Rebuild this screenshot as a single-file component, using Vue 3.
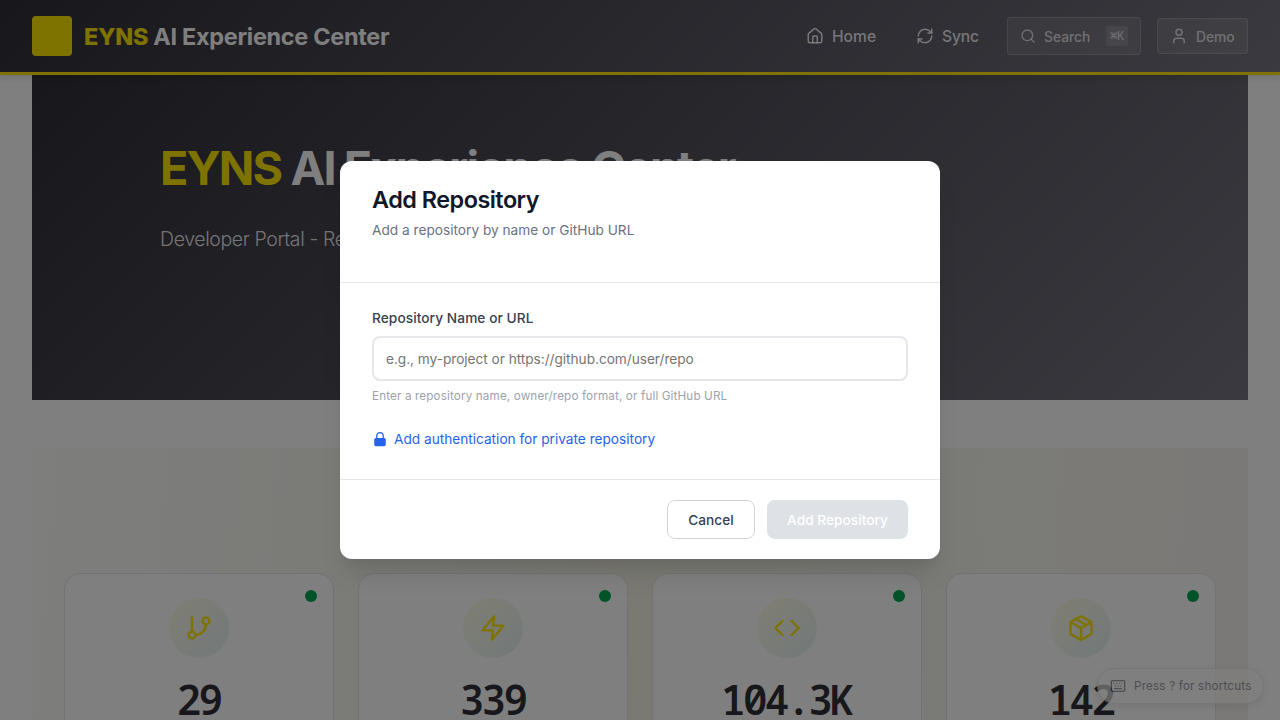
<script setup>
const stats = [
  { value: '29', icon: 'branch' },
  { value: '339', icon: 'zap' },
  { value: '104.3K', icon: 'code' },
  { value: '142', icon: 'package' },
]
</script>

<template>
  <div class="page">
    <header class="topbar">
      <div class="brand">
        <span class="logo"></span>
        <span class="brand-name"><b>EYNS</b> AI Experience Center</span>
      </div>
      <nav class="nav">
        <a class="nav-link">
          <svg class="icon" viewBox="0 0 24 24"><path d="M15 21v-8a1 1 0 0 0-1-1h-4a1 1 0 0 0-1 1v8" /><path d="M3 10a2 2 0 0 1 .709-1.528l7-5.999a2 2 0 0 1 2.582 0l7 5.999A2 2 0 0 1 21 10v9a2 2 0 0 1-2 2H5a2 2 0 0 1-2-2z" /></svg>
          <span class="home-text">Home</span>
        </a>
        <a class="nav-link">
          <svg class="icon" viewBox="0 0 24 24"><path d="M3 12a9 9 0 0 1 9-9 9.75 9.75 0 0 1 6.74 2.74L21 8" /><path d="M21 3v5h-5" /><path d="M21 12a9 9 0 0 1-9 9 9.75 9.75 0 0 1-6.74-2.74L3 16" /><path d="M8 16H3v5" /></svg>
          <span class="sync-text">Sync</span>
        </a>
        <button class="search">
          <svg class="icon small" viewBox="0 0 24 24"><circle cx="11" cy="11" r="8" /><path d="m21 21-4.3-4.3" /></svg>
          <span>Search</span>
          <kbd><i>⌘</i>K</kbd>
        </button>
        <button class="user">
          <svg class="icon" viewBox="0 0 24 24"><path d="M19 21v-2a4 4 0 0 0-4-4H9a4 4 0 0 0-4 4v2" /><circle cx="12" cy="7" r="4" /></svg>
          <span>Demo</span>
        </button>
      </nav>
    </header>

    <section class="hero">
      <h1><b>EYNS</b> AI Experience Center</h1>
      <p>Developer Portal - Repository Analytics</p>
    </section>

    <section class="stats">
      <article v-for="s in stats" :key="s.icon" class="card">
        <span class="dot"></span>
        <span class="badge">
          <svg v-if="s.icon === 'branch'" viewBox="0 0 24 24"><path d="M6 3v12" /><circle cx="18" cy="6" r="3" /><circle cx="6" cy="18" r="3" /><path d="M18 9a9 9 0 0 1-9 9" /></svg>
          <svg v-else-if="s.icon === 'zap'" viewBox="0 0 24 24"><path d="M13 2 3 14h9l-1 8 10-12h-9z" /></svg>
          <svg v-else-if="s.icon === 'code'" viewBox="0 0 24 24"><path d="m16 18 6-6-6-6M8 6l-6 6 6 6" /></svg>
          <svg v-else viewBox="0 0 24 24"><path d="m7.5 4.27 9 5.15" /><path d="M21 8a2 2 0 0 0-1-1.73l-7-4a2 2 0 0 0-2 0l-7 4A2 2 0 0 0 3 8v8a2 2 0 0 0 1 1.73l7 4a2 2 0 0 0 2 0l7-4A2 2 0 0 0 21 16Z" /><path d="m3.3 7 8.7 5 8.7-5" /><path d="M12 22V12" /></svg>
        </span>
        <div class="value">{{ s.value }}</div>
      </article>
    </section>

    <div class="hint">
      <svg class="icon small" viewBox="0 0 24 24"><rect x="2" y="4" width="20" height="16" rx="2" /><path d="M6 8h.01M10 8h.01M14 8h.01M18 8h.01M8 12h.01M12 12h.01M16 12h.01M7 16h10" /></svg>
      <span>Press ? for shortcuts</span>
    </div>

    <div class="overlay">
      <div class="modal">
        <div class="modal-head">
          <h2>Add Repository</h2>
          <p>Add a repository by name or GitHub URL</p>
        </div>
        <div class="modal-body">
          <label for="repo">Repository Name or URL</label>
          <input id="repo" placeholder="e.g., my-project or https://github.com/user/repo" />
          <p class="help">Enter a repository name, owner/repo format, or full GitHub URL</p>
          <a class="auth">
            <svg viewBox="0 0 20 20"><path d="M6 10V6a4 4 0 0 1 8 0v4" fill="none" stroke="currentColor" stroke-width="1.6" /><rect x="2.8" y="8.6" width="14.4" height="10.4" rx="2" /></svg>
            Add authentication for private repository
          </a>
        </div>
        <div class="modal-foot">
          <button class="cancel">Cancel</button>
          <button class="submit" disabled>Add Repository</button>
        </div>
      </div>
    </div>
  </div>
</template>

<style>
body { background: #fff; overflow: hidden; }
</style>

<style scoped>
* { box-sizing: border-box; }
h1, h2, p { margin: 0; }
button, input { font-family: inherit; letter-spacing: inherit; }
.page { position: relative; height: 720px; overflow: hidden; background: #fff; font-family: Inter, "Liberation Sans", sans-serif; }
.icon { width: 18px; height: 18px; fill: none; stroke: currentColor; stroke-width: 2; stroke-linecap: round; stroke-linejoin: round; flex: none; }
.icon.small { width: 16px; height: 16px; }
.topbar { position: relative; z-index: 1; display: flex; align-items: center; justify-content: space-between; height: 75px; padding: 0 32px; border-bottom: 3px solid #ffe600; background: linear-gradient(135deg, #2e2e38, #747480); box-shadow: 0 4px 6px rgba(0, 0, 0, .1); }
.brand { display: flex; align-items: center; gap: 12px; }
.logo { width: 40px; height: 40px; border-radius: 4px; background: #ffe600; }
.brand-name { font-size: 23.4px; line-height: 36px; font-weight: 700; letter-spacing: -.28px; color: #fff; padding-top: 1px; }
.brand-name b, .hero b { font-weight: inherit; color: #ffe600; }
.brand-name b { font-weight: 800; }
.nav { display: flex; align-items: center; gap: 16px; color: rgba(255, 255, 255, .9); }
.nav-link { display: flex; align-items: center; gap: 8px; padding: 0 12px; font-size: 15.6px; font-weight: 450; }
.home-text { width: 44px; }
.sync-text { width: 37px; letter-spacing: -.1px; }
.search, .user { display: flex; align-items: center; gap: 8px; border: 1px solid rgba(255, 255, 255, .2); border-radius: 4px; background: rgba(255, 255, 255, .1); color: rgba(255, 255, 255, .8); font-size: 13.8px; font-weight: 450; }
.search { width: 134px; height: 38px; padding: 0 12px; }
.user { width: 91px; height: 36px; padding: 0 12px; }
.user span, .search span { padding-top: 1px; }
kbd { display: flex; justify-content: center; width: 22px; height: 20px; margin-left: auto; border-radius: 2px; background: rgba(255, 255, 255, .15); font: 12.5px/19px "Noto Sans Mono", "Roboto Mono", monospace; letter-spacing: -.5px; }
kbd i { font-style: normal; }
.hero { height: 325px; margin: 0 32px; padding: 64px 128px; background: linear-gradient(135deg, #2e2e38, #747480); color: #fff; white-space: nowrap; }
.hero h1 { font-size: 46.7px; line-height: 58px; font-weight: 700; letter-spacing: -1.86px; }
.hero p { margin-top: 26px; font-size: 19.5px; line-height: 32px; font-weight: 300; letter-spacing: -.39px; color: rgba(255, 255, 255, .9); }
.stats { display: grid; grid-template-columns: repeat(4, 1fr); gap: 24px; height: 400px; margin: 48px 32px 0; padding: 125px 32px 0; background: radial-gradient(circle at 50% 50%, rgba(255, 230, 0, .03), transparent 60%), linear-gradient(95deg, #fcfcfb, #f7f7f1 22%, #f3f4eb 55%, #f6f6ef 80%, #f6f2ee); }
.card { position: relative; display: flex; flex-direction: column; align-items: center; height: 300px; padding-top: 24px; border: 1px solid #e5e5ea; border-radius: 16px; background: #fff; }
.dot { position: absolute; top: 16px; right: 16px; width: 12px; height: 12px; border-radius: 50%; background: #00a651; }
.badge { display: grid; place-items: center; width: 60px; height: 60px; border-radius: 50%; background: linear-gradient(135deg, rgba(255, 230, 0, .1), rgba(0, 120, 160, .1)); color: #ffe600; }
.badge svg { width: 28px; height: 28px; fill: none; stroke: currentColor; stroke-width: 2; stroke-linecap: round; stroke-linejoin: round; }
.value { margin: 21px 1px 0 0; font: 600 41px/40px "Noto Sans Mono", "Roboto Mono", monospace; letter-spacing: -2.8px; color: #2e2e38; }
.hint { position: absolute; right: 16px; bottom: 16px; display: flex; align-items: center; gap: 8px; width: 167px; height: 36px; padding: 0 12px 1px; border: 1px solid #e5e5ea; border-radius: 18px; background: #fff; color: #747480; font-size: 11.7px; letter-spacing: .17px; white-space: nowrap; opacity: .7; box-shadow: 0 2px 8px rgba(0, 0, 0, .12); }
.overlay { position: absolute; inset: 0; z-index: 5; display: flex; align-items: center; justify-content: center; background: rgba(0, 0, 0, .5); }
.modal { width: 600px; border-radius: 12px; background: #fff; box-shadow: 0 20px 25px -5px rgba(0, 0, 0, .1), 0 10px 10px -5px rgba(0, 0, 0, .04); }
.modal-head { height: 122px; padding: 24px 32px; border-bottom: 1px solid #e5e7eb; }
.modal-head h2 { font-size: 23.4px; line-height: 30px; font-weight: 600; letter-spacing: -.5px; color: #111827; }
.modal-head p { margin-top: 4px; font-size: 13.7px; line-height: 22px; letter-spacing: -.01px; color: #6b7280; }
.modal-body { height: 196px; padding: 24px 32px; }
.modal-body label { display: block; font-size: 13.7px; line-height: 22px; font-weight: 500; letter-spacing: .07px; color: #374151; }
.modal-body input { display: block; width: 100%; height: 45px; margin-top: 7px; padding: 0 12px; border: 2px solid #e5e7eb; border-radius: 8px; background: #fff; font-size: 13.7px; letter-spacing: -.04px; }
.modal-body input::placeholder { color: #757575; }
.help { margin-top: 5px; font-size: 11.7px; line-height: 20px; letter-spacing: .13px; color: #9ca3af; }
.auth { display: flex; align-items: center; gap: 6px; margin-top: 22px; font-size: 13.7px; line-height: 22px; letter-spacing: -.02px; color: #2563eb; }
.auth svg { width: 16px; height: 16px; fill: currentColor; }
.modal-foot { display: flex; justify-content: flex-end; gap: 12px; height: 80px; padding: 20px 32px; border-top: 1px solid #e5e7eb; }
.modal-foot button { height: 39px; padding: 0; border-radius: 8px; font-size: 13.7px; font-weight: 500; letter-spacing: .02px; }
.cancel { width: 88px; border: 1px solid #d1d5db; background: #fff; color: #374151; }
.submit { width: 141px; border: 0; background: #dee1e6; color: #fff; }
</style>
